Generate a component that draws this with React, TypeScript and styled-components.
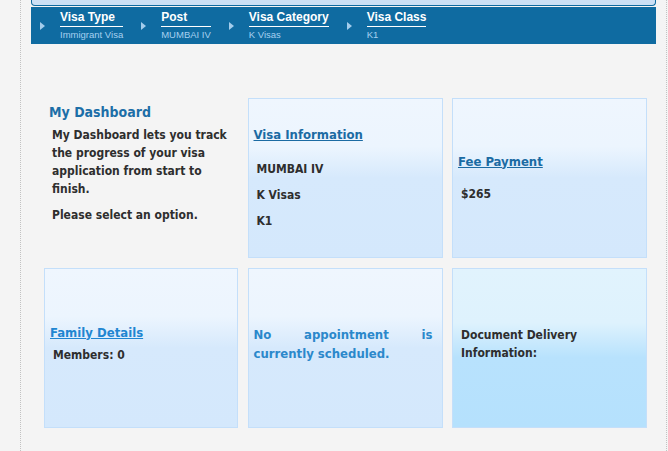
import React from 'react';
import styled, { createGlobalStyle } from 'styled-components';

const GlobalStyle = createGlobalStyle`
  html, body { margin: 0; padding: 0; background: #f4f4f4; }
  body { font-family: "DejaVu Sans Condensed", "DejaVu Sans", sans-serif; }
`;

const Page = styled.div`
  margin-left: 20px;
  width: 647px;
  min-height: 451px;
  box-sizing: border-box;
  border-left: 1px dotted #c2c2c2;
  border-right: 1px dotted #c2c2c2;
  padding: 0 10px;
`;

const TopStrip = styled.div`
  height: 6px;
  box-sizing: border-box;
  background: #cce0f5;
  border: 1px solid #0f6ba1;
  border-top: none;
  border-radius: 0 0 4px 4px;
`;

const Crumbs = styled.nav`
  margin-top: 1px;
  background: #0f6ba1;
  display: flex;
  gap: 18px;
  padding: 3px 0 4px 9px;
  font-family: "Liberation Sans", Arial, sans-serif;
`;

const Crumb = styled.div`
  display: flex;
  align-items: center;
  gap: 15px;
`;

const Arrow = styled.span`
  width: 0;
  height: 0;
  border-left: 5px solid #a3cdec;
  border-top: 4.5px solid transparent;
  border-bottom: 4.5px solid transparent;
  margin-top: 2px;
`;

const CrumbBody = styled.div`
  display: flex;
  flex-direction: column;
`;

const CrumbTitle = styled.div`
  color: #ffffff;
  font-weight: bold;
  font-size: 12px;
  line-height: 14px;
  padding-bottom: 2px;
  border-bottom: 1px solid #ffffff;
`;

const CrumbSub = styled.div`
  margin-top: 2px;
  color: #a6d0f0;
  font-size: 9.5px;
  line-height: 11px;
`;

const Dashboard = styled.main`
  margin: 54px 0 0 13px;
  display: grid;
  grid-template-columns: 194px 195px 195px;
  grid-auto-rows: 160px;
  column-gap: 9.5px;
  row-gap: 10px;
`;

const Intro = styled.div`
  padding: 6px 6px 0 5px;
`;

const IntroTitle = styled.h2`
  margin: 0;
  font-size: 14px;
  line-height: 17px;
  font-weight: bold;
  color: #1c6ea7;
`;

const IntroText = styled.p<{ $gap: number }>`
  margin: ${(p) => p.$gap}px 0 0 3px;
  font-size: 12px;
  line-height: 18px;
  font-weight: bold;
  color: #2e2e2e;
`;

const Card = styled.section<{ $tone?: 'blue' | 'sky'; $lift?: boolean }>`
  box-sizing: border-box;
  border: 1px solid #c4dffa;
  background: ${(p) =>
    p.$tone === 'sky'
      ? 'linear-gradient(to bottom, #e1f3fd 0%, #def2fd 34%, #b8e2fd 56%, #b5e1fd 100%)'
      : 'linear-gradient(to bottom, #eff6fe 0%, #ecf5fe 30%, #d6e9fc 50%, #d4e8fc 100%)'};
  display: flex;
  flex-direction: column;
  justify-content: center;
  padding: 0 9px ${(p) => (p.$lift ? 8 : 0)}px 5px;
`;

const CardLink = styled.a<{ $bright?: boolean }>`
  display: block;
  font-size: 13px;
  line-height: 16px;
  font-weight: bold;
  color: ${(p) => (p.$bright ? '#1f86d1' : '#1b6ba3')};
  text-decoration: underline;
  cursor: pointer;
`;

const Values = styled.div<{ $gap: number }>`
  margin-top: ${(p) => p.$gap}px;
  display: flex;
  flex-direction: column;
  gap: 8px;
`;

const Value = styled.div`
  margin-left: 3px;
  font-size: 12px;
  line-height: 18px;
  font-weight: bold;
  color: #2e2e2e;
`;

const Notice = styled.p`
  margin: 0;
  font-size: 13px;
  line-height: 19px;
  font-weight: bold;
  color: #2b88cb;
  text-align: justify;
`;

const crumbs = [
  { title: 'Visa Type', sub: 'Immigrant Visa' },
  { title: 'Post', sub: 'MUMBAI IV' },
  { title: 'Visa Category', sub: 'K Visas' },
  { title: 'Visa Class', sub: 'K1' },
];

export default function App() {
  return (
    <>
      <GlobalStyle />
      <Page>
        <TopStrip />
        <Crumbs>
          {crumbs.map((c) => (
            <Crumb key={c.title}>
              <Arrow />
              <CrumbBody>
                <CrumbTitle>{c.title}</CrumbTitle>
                <CrumbSub>{c.sub}</CrumbSub>
              </CrumbBody>
            </Crumb>
          ))}
        </Crumbs>
        <Dashboard>
          <Intro>
            <IntroTitle>My Dashboard</IntroTitle>
            <IntroText $gap={5}>
              My Dashboard lets you track the progress of your visa application from start to finish.
            </IntroText>
            <IntroText $gap={8}>Please select an option.</IntroText>
          </Intro>
          <Card>
            <CardLink>Visa Information</CardLink>
            <Values $gap={17}>
              <Value>MUMBAI IV</Value>
              <Value>K Visas</Value>
              <Value>K1</Value>
            </Values>
          </Card>
          <Card>
            <CardLink>Fee Payment</CardLink>
            <Values $gap={15}>
              <Value>$265</Value>
            </Values>
          </Card>
          <Card $lift>
            <CardLink $bright>Family Details</CardLink>
            <Values $gap={5}>
              <Value>Members: 0</Value>
            </Values>
          </Card>
          <Card $lift>
            <Notice>No appointment is currently scheduled.</Notice>
          </Card>
          <Card $tone="sky" $lift>
            <Values $gap={0}>
              <Value>Document Delivery Information:</Value>
            </Values>
          </Card>
        </Dashboard>
      </Page>
    </>
  );
}
